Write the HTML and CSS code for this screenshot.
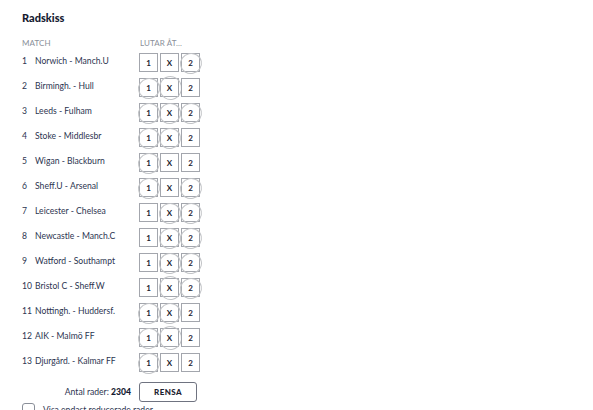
FILE: index.html
```html
<!DOCTYPE html>
<html lang="sv">
<head>
<meta charset="utf-8">
<title>Radskiss</title>
<link rel="stylesheet" href="styles.css">
</head>
<body>
<div class="panel">
  <h2 class="title">Radskiss</h2>
  <div class="head">
    <span class="h-match">MATCH</span>
    <span class="h-lutar">LUTAR ÅT...</span>
  </div>
  <div class="rows">
    <div class="row"><span class="num">1</span><span class="name">Norwich - Manch.U</span><div class="opts"><span class="opt">1</span><span class="opt">X</span><span class="opt on">2</span></div></div>
    <div class="row"><span class="num">2</span><span class="name">Birmingh. - Hull</span><div class="opts"><span class="opt on">1</span><span class="opt on big">X</span><span class="opt">2</span></div></div>
    <div class="row"><span class="num">3</span><span class="name">Leeds - Fulham</span><div class="opts"><span class="opt on">1</span><span class="opt on">X</span><span class="opt on">2</span></div></div>
    <div class="row"><span class="num">4</span><span class="name">Stoke - Middlesbr</span><div class="opts"><span class="opt on">1</span><span class="opt on">X</span><span class="opt">2</span></div></div>
    <div class="row"><span class="num">5</span><span class="name">Wigan - Blackburn</span><div class="opts"><span class="opt on">1</span><span class="opt">X</span><span class="opt">2</span></div></div>
    <div class="row"><span class="num">6</span><span class="name">Sheff.U - Arsenal</span><div class="opts"><span class="opt on">1</span><span class="opt">X</span><span class="opt on">2</span></div></div>
    <div class="row"><span class="num">7</span><span class="name">Leicester - Chelsea</span><div class="opts"><span class="opt">1</span><span class="opt on">X</span><span class="opt on">2</span></div></div>
    <div class="row"><span class="num">8</span><span class="name">Newcastle - Manch.C</span><div class="opts"><span class="opt">1</span><span class="opt on">X</span><span class="opt on">2</span></div></div>
    <div class="row"><span class="num">9</span><span class="name">Watford - Southampt</span><div class="opts"><span class="opt">1</span><span class="opt on">X</span><span class="opt on">2</span></div></div>
    <div class="row"><span class="num">10</span><span class="name">Bristol C - Sheff.W</span><div class="opts"><span class="opt">1</span><span class="opt on big">X</span><span class="opt on">2</span></div></div>
    <div class="row"><span class="num">11</span><span class="name">Nottingh. - Huddersf.</span><div class="opts"><span class="opt on">1</span><span class="opt on">X</span><span class="opt">2</span></div></div>
    <div class="row"><span class="num">12</span><span class="name">AIK - Malmö FF</span><div class="opts"><span class="opt on">1</span><span class="opt on big">X</span><span class="opt">2</span></div></div>
    <div class="row"><span class="num">13</span><span class="name">Djurgård. - Kalmar FF</span><div class="opts"><span class="opt on">1</span><span class="opt">X</span><span class="opt">2</span></div></div>
  </div>
  <div class="footer">
    <span class="count">Antal rader: <b>2304</b></span>
    <button class="reset">RENSA</button>
  </div>
  <div class="check"><span class="box"></span><span class="check-label">Visa endast reducerade rader</span></div>
</div>
</body>
</html>
```

FILE: styles.css
```css
html, body {
  margin: 0;
  padding: 0;
  background: #ffffff;
}
body {
  font-family: Lato, "Open Sans", sans-serif;
  color: #1c2540;
}
.panel {
  padding: 11px 0 0 22px;
  width: 180px;
}
.title {
  margin: 0;
  font-size: 11px;
  font-weight: 900;
  line-height: 14px;
  color: #141a30;
}
.head {
  display: flex;
  margin-top: 13px;
  font-size: 8px;
  line-height: 10px;
  color: #8a8f99;
  letter-spacing: 0.1px;
}
.h-match {
  width: 118px;
}
.rows {
  margin-top: 5px;
  display: flex;
  flex-direction: column;
  gap: 6px;
}
.row {
  display: flex;
  align-items: center;
  height: 19px;
  font-size: 8.6px;
  color: #2c3450;
}
.num {
  width: 13px;
  margin-top: -4px;
}
.name {
  width: 104px;
  margin-top: -4px;
  white-space: nowrap;
}
.opts {
  display: flex;
  gap: 2px;
}
.opt {
  position: relative;
  width: 17px;
  height: 17px;
  border: 1px solid #a3a6ad;
  display: flex;
  align-items: center;
  justify-content: center;
  font-size: 8px;
  font-weight: 700;
  color: #1c2230;
}
.opt.on::after {
  content: "";
  position: absolute;
  left: -2px;
  top: -1px;
  width: 20px;
  height: 19px;
  border: 1px solid #c2c4c7;
  border-radius: 50%;
  transform: rotate(-12deg);
}
.opt.big::after {
  left: -2px;
  top: -3px;
  width: 21px;
  height: 22px;
}
.footer {
  display: flex;
  align-items: center;
  justify-content: flex-end;
  gap: 8px;
  margin-top: 10px;
  width: 175px;
}
.count {
  font-size: 8.6px;
  color: #2c3450;
}
.count b {
  font-weight: 900;
  color: #141a30;
}
.reset {
  width: 58px;
  height: 20px;
  padding: 0;
  background: #fff;
  border: 1px solid #6f7380;
  border-radius: 3px;
  font-family: Lato, "Open Sans", sans-serif;
  font-size: 8px;
  font-weight: 900;
  letter-spacing: 0.4px;
  color: #1c2230;
}
.check {
  display: flex;
  align-items: center;
  gap: 8px;
  margin-top: 1px;
}
.box {
  width: 11px;
  height: 11px;
  border: 1px solid #8a8f99;
  border-radius: 3px;
}
.check-label {
  font-size: 8.6px;
  color: #2c3450;
}
```
